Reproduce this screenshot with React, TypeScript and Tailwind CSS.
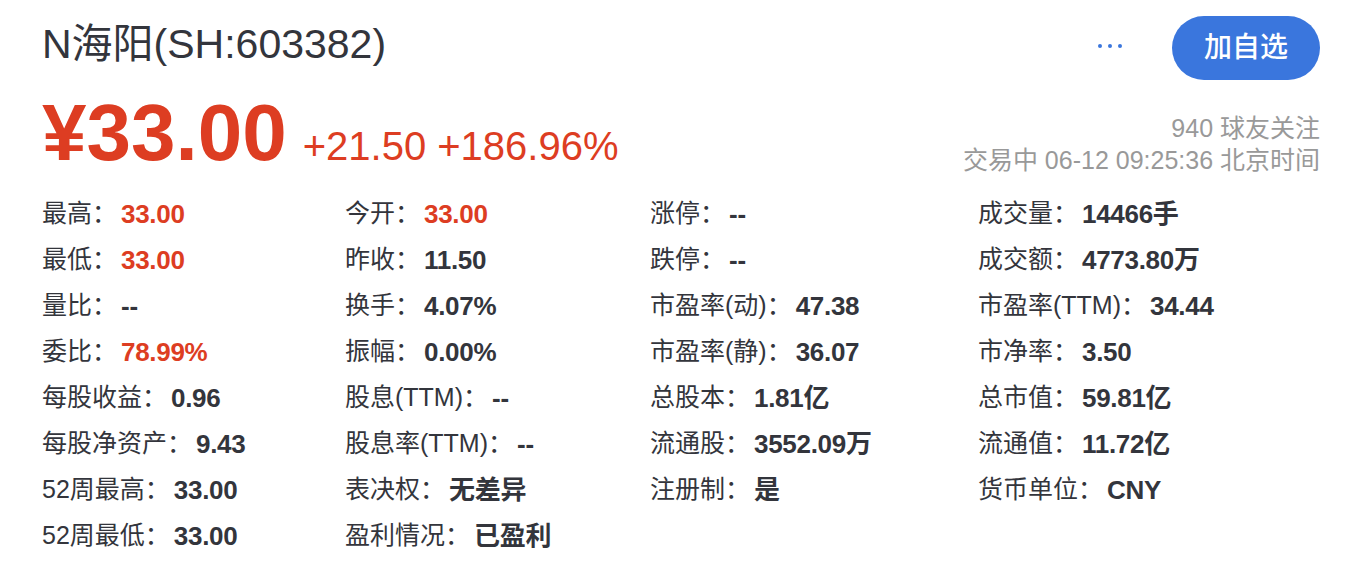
const FONT = '"Liberation Sans", "Noto Sans CJK SC", sans-serif';

type Cell = { label: string; value: string; red?: boolean };

const rows: Cell[][] = [
  [
    { label: '最高', value: '33.00', red: true },
    { label: '今开', value: '33.00', red: true },
    { label: '涨停', value: '--' },
    { label: '成交量', value: '14466手' },
  ],
  [
    { label: '最低', value: '33.00', red: true },
    { label: '昨收', value: '11.50' },
    { label: '跌停', value: '--' },
    { label: '成交额', value: '4773.80万' },
  ],
  [
    { label: '量比', value: '--' },
    { label: '换手', value: '4.07%' },
    { label: '市盈率(动)', value: '47.38' },
    { label: '市盈率(TTM)', value: '34.44' },
  ],
  [
    { label: '委比', value: '78.99%', red: true },
    { label: '振幅', value: '0.00%' },
    { label: '市盈率(静)', value: '36.07' },
    { label: '市净率', value: '3.50' },
  ],
  [
    { label: '每股收益', value: '0.96' },
    { label: '股息(TTM)', value: '--' },
    { label: '总股本', value: '1.81亿' },
    { label: '总市值', value: '59.81亿' },
  ],
  [
    { label: '每股净资产', value: '9.43' },
    { label: '股息率(TTM)', value: '--' },
    { label: '流通股', value: '3552.09万' },
    { label: '流通值', value: '11.72亿' },
  ],
  [
    { label: '52周最高', value: '33.00' },
    { label: '表决权', value: '无差异' },
    { label: '注册制', value: '是' },
    { label: '货币单位', value: 'CNY' },
  ],
  [
    { label: '52周最低', value: '33.00' },
    { label: '盈利情况', value: '已盈利' },
  ],
];

function StatCell({ cell }: { cell?: Cell }) {
  if (!cell) return <div />;
  return (
    <div className="flex items-center h-[46px] whitespace-nowrap">
      <span className="text-[25px] text-[#33353c]">{cell.label}：</span>
      <span
        className={`ml-1 text-[26px] font-bold tracking-[-0.3px] ${
          cell.red ? 'text-[#dd3d22]' : 'text-[#33353c]'
        }`}
      >
        {cell.value}
      </span>
    </div>
  );
}

export default function App() {
  return (
    <div className="w-[1352px] h-[576px] bg-white pl-[42px] pr-[32px] pt-4" style={{ fontFamily: FONT }}>
      {/* header */}
      <div className="flex items-center justify-between h-16">
        <h1 className="text-[41px] leading-10 text-[#33353c] -mt-2">N海阳(SH:603382)</h1>
        <div className="flex items-center">
          <div className="flex items-center gap-[6px] mr-[50px] -mt-1">
            <span className="w-1 h-1 rounded-full bg-[#3a76dd]" />
            <span className="w-1 h-1 rounded-full bg-[#3a76dd]" />
            <span className="w-1 h-1 rounded-full bg-[#3a76dd]" />
          </div>
          <button className="w-[148px] h-16 rounded-full bg-[#3a76dd] text-white text-[28px] font-medium">
            加自选
          </button>
        </div>
      </div>

      {/* price */}
      <div className="flex items-end justify-between mt-[14px]">
        <div className="flex items-baseline text-[#dd3d22]">
          <span className="text-[80px] leading-[78px] font-bold">¥33.00</span>
          <span className="ml-[16px] text-[40px]">+21.50 +186.96%</span>
        </div>
        <div className="flex flex-col items-end text-[25px] leading-8 text-[#999999] mb-0">
          <span>940 球友关注</span>
          <span>交易中 06-12 09:25:36 北京时间</span>
        </div>
      </div>

      {/* stats */}
      <div className="grid grid-cols-[303px_305px_328px_1fr] mt-[15px]">
        {rows.map((row, i) =>
          [0, 1, 2, 3].map((j) => <StatCell key={`${i}-${j}`} cell={row[j]} />)
        )}
      </div>
    </div>
  );
}
